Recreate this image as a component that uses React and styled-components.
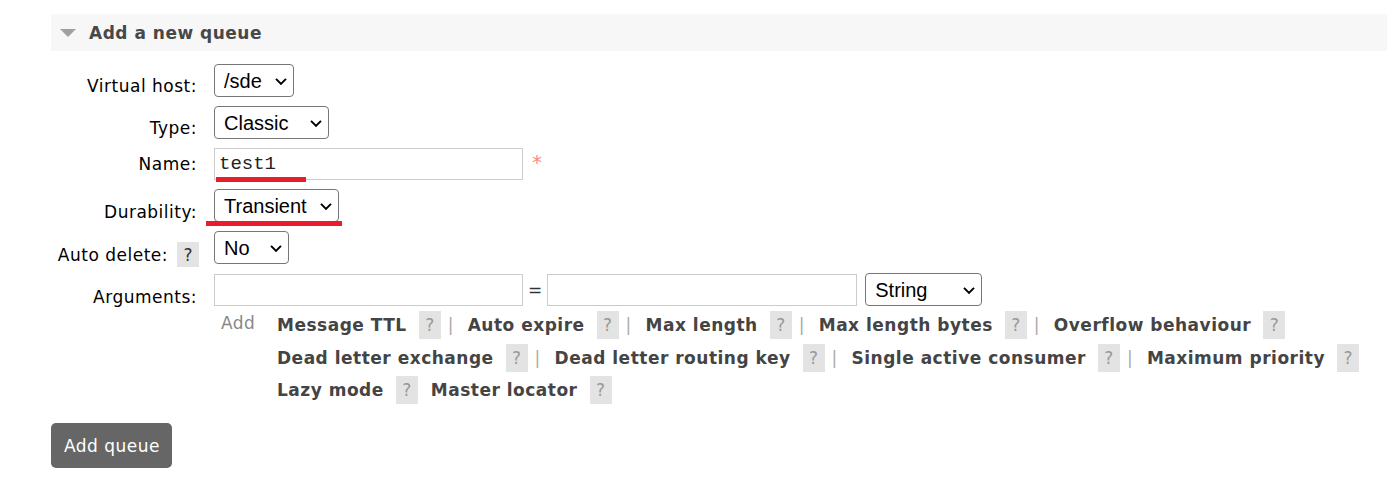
import React from 'react';
import styled, { createGlobalStyle } from 'styled-components';

const GlobalStyle = createGlobalStyle`
  html, body { margin: 0; padding: 0; background: #fff; }
  body { font-family: "DejaVu Sans", Verdana, sans-serif; color: #000; }
  * { box-sizing: border-box; }
`;

const Page = styled.div`
  padding: 14px 0 0 51px;
`;

const SectionHeader = styled.h2`
  margin: 0;
  height: 37px;
  display: flex;
  align-items: center;
  gap: 13px;
  padding-left: 9px;
  background: #f7f7f7;
  font-size: 17px;
  font-weight: bold;
  letter-spacing: 0.5px;
  color: #484848;
`;

const FormGrid = styled.div`
  display: grid;
  grid-template-columns: 148px auto;
  column-gap: 15px;
  row-gap: 9px;
  margin-top: 13px;
  justify-content: start;
  align-items: start;
`;

const Label = styled.div`
  display: flex;
  justify-content: flex-end;
  align-items: flex-start;
  gap: 9px;
  height: 32px;
  font-size: 17px;
  line-height: 20px;
  letter-spacing: 0.5px;
  text-align: right;
  padding-top: ${(p) => p.$offset}px;
  padding-right: ${(p) => (p.$help ? 0 : 2)}px;
  color: #000;
  white-space: nowrap;
`;

const LabelHelp = styled.span`
  display: inline-flex;
  align-items: center;
  justify-content: center;
  flex: none;
  width: 22px;
  height: 25px;
  margin-top: -3px;
  background: #e3e3e3;
  color: #333;
  letter-spacing: 0;
`;

const Field = styled.div`
  position: relative;
  display: flex;
  align-items: flex-start;
`;

const SelectWrap = styled.span`
  position: relative;
  display: inline-flex;
  flex: none;
  width: ${(p) => p.$w}px;
  height: 33px;
  margin-left: ${(p) => p.$ml || 0}px;
`;

const NativeSelect = styled.select`
  appearance: none;
  -webkit-appearance: none;
  width: 100%;
  height: 100%;
  margin: 0;
  border: 1px solid #767676;
  border-radius: 4px;
  background: #fff;
  color: #000;
  font-family: "Liberation Sans", Arial, sans-serif;
  font-size: 20px;
  padding: 0 24px 0 9px;
  outline: none;
`;

const Chevron = styled.svg`
  position: absolute;
  right: 7px;
  top: 50%;
  transform: translateY(-45%);
  pointer-events: none;
`;

const TextInput = styled.input`
  flex: none;
  width: ${(p) => p.$w}px;
  height: 32px;
  margin: 0;
  border: 1px solid #cccccc;
  border-radius: 0;
  padding: 0 4px;
  background: #fff;
  color: #222;
  font-family: "Liberation Mono", "Courier New", monospace;
  font-size: 19px;
  outline: none;
`;

const Mandatory = styled.span`
  margin-left: 9px;
  margin-top: 4px;
  font-size: 20px;
  line-height: 20px;
  color: #f88;
`;

const Mark = styled.span`
  position: absolute;
  left: ${(p) => p.$left}px;
  top: ${(p) => p.$top}px;
  width: ${(p) => p.$w}px;
  height: 5px;
  background: #e81c2b;
  pointer-events: none;
`;

const ArgsCell = styled.div`
  display: flex;
  flex-direction: column;
`;

const ArgInputs = styled.div`
  display: flex;
  align-items: center;
`;

const Eq = styled.span`
  margin: 0 5px;
  font-size: 17px;
  color: #333;
`;

const ArgHelpRow = styled.div`
  display: flex;
  align-items: flex-start;
  margin-top: 5px;
`;

const AddText = styled.span`
  flex: none;
  width: 63px;
  padding-left: 7px;
  padding-top: 2px;
  font-size: 17px;
  line-height: 20px;
  letter-spacing: 0.5px;
  color: #888;
`;

const LinkRows = styled.div`
  display: flex;
  flex-direction: column;
  gap: 4.5px;
`;

const LinkRow = styled.div`
  display: flex;
  align-items: center;
  height: 28px;
  gap: ${(p) => (p.$sep ? 0 : 13)}px;
  white-space: nowrap;
`;

const Item = styled.span`
  display: inline-flex;
  align-items: center;
  gap: 12px;
`;

const ArgLink = styled.span`
  font-size: 17px;
  line-height: 20px;
  font-weight: bold;
  letter-spacing: 0.5px;
  color: #444;
`;

const HelpBox = styled.span`
  display: inline-flex;
  align-items: center;
  justify-content: center;
  width: 22px;
  height: 28px;
  background: #e3e3e3;
  color: #999;
  font-size: 17px;
`;

const Sep = styled.span`
  flex: none;
  width: 27px;
  padding-left: 7px;
  font-size: 17px;
  color: #aaa;
`;

const SubmitButton = styled.button`
  display: block;
  margin-top: 19px;
  width: 121px;
  height: 45px;
  padding: 0 0 0 1px;
  border: none;
  border-radius: 5px;
  background: #666;
  color: #fff;
  font-family: "DejaVu Sans", Verdana, sans-serif;
  font-size: 17px;
  letter-spacing: 0.5px;
  cursor: pointer;
`;

function Select({ w, ml, value, options }) {
  return (
    <SelectWrap $w={w} $ml={ml}>
      <NativeSelect defaultValue={value}>
        {options.map((o) => (
          <option key={o}>{o}</option>
        ))}
      </NativeSelect>
      <Chevron width="12" height="8" viewBox="0 0 12 8">
        <polyline points="1,1.5 6,6.5 11,1.5" fill="none" stroke="#000" strokeWidth="2" />
      </Chevron>
    </SelectWrap>
  );
}

const linkRows = [
  { sep: true, items: ['Message TTL', 'Auto expire', 'Max length', 'Max length bytes', 'Overflow behaviour'] },
  { sep: true, items: ['Dead letter exchange', 'Dead letter routing key', 'Single active consumer', 'Maximum priority'] },
  { sep: false, items: ['Lazy mode', 'Master locator'] },
];

export default function App() {
  return (
    <Page>
      <GlobalStyle />
      <SectionHeader>
        <svg width="16" height="8" viewBox="0 0 16 8">
          <polygon points="0,0 16,0 8,8" fill="#a0a0a0" />
        </svg>
        Add a new queue
      </SectionHeader>

      <FormGrid>
        <Label $offset={12}>Virtual host:</Label>
        <Field>
          <Select w={80} value="/sde" options={['/sde', '/']} />
        </Field>

        <Label $offset={12}>Type:</Label>
        <Field>
          <Select w={115} value="Classic" options={['Classic', 'Quorum', 'Stream']} />
        </Field>

        <Label $offset={6}>Name:</Label>
        <Field>
          <TextInput $w={309} defaultValue="test1" />
          <Mandatory>*</Mandatory>
          <Mark $left={2} $top={29} $w={90} />
        </Field>

        <Label $offset={13}>Durability:</Label>
        <Field>
          <Select w={125} value="Transient" options={['Durable', 'Transient']} />
          <Mark $left={-8} $top={32} $w={136} />
        </Field>

        <Label $offset={14} $help>
          Auto delete:
          <LabelHelp>?</LabelHelp>
        </Label>
        <Field>
          <Select w={75} value="No" options={['No', 'Yes']} />
        </Field>

        <Label $offset={14}>Arguments:</Label>
        <ArgsCell>
          <ArgInputs>
            <TextInput $w={309} />
            <Eq>=</Eq>
            <TextInput $w={310} />
            <Select w={117} ml={8} value="String" options={['String', 'Number', 'Boolean', 'List']} />
          </ArgInputs>
          <ArgHelpRow>
            <AddText>Add</AddText>
            <LinkRows>
              {linkRows.map((row, ri) => (
                <LinkRow key={ri} $sep={row.sep}>
                  {row.items.map((it, i) => (
                    <React.Fragment key={it}>
                      {row.sep && i > 0 && <Sep>|</Sep>}
                      <Item>
                        <ArgLink>{it}</ArgLink>
                        <HelpBox>?</HelpBox>
                      </Item>
                    </React.Fragment>
                  ))}
                </LinkRow>
              ))}
            </LinkRows>
          </ArgHelpRow>
        </ArgsCell>
      </FormGrid>

      <SubmitButton>Add queue</SubmitButton>
    </Page>
  );
}
